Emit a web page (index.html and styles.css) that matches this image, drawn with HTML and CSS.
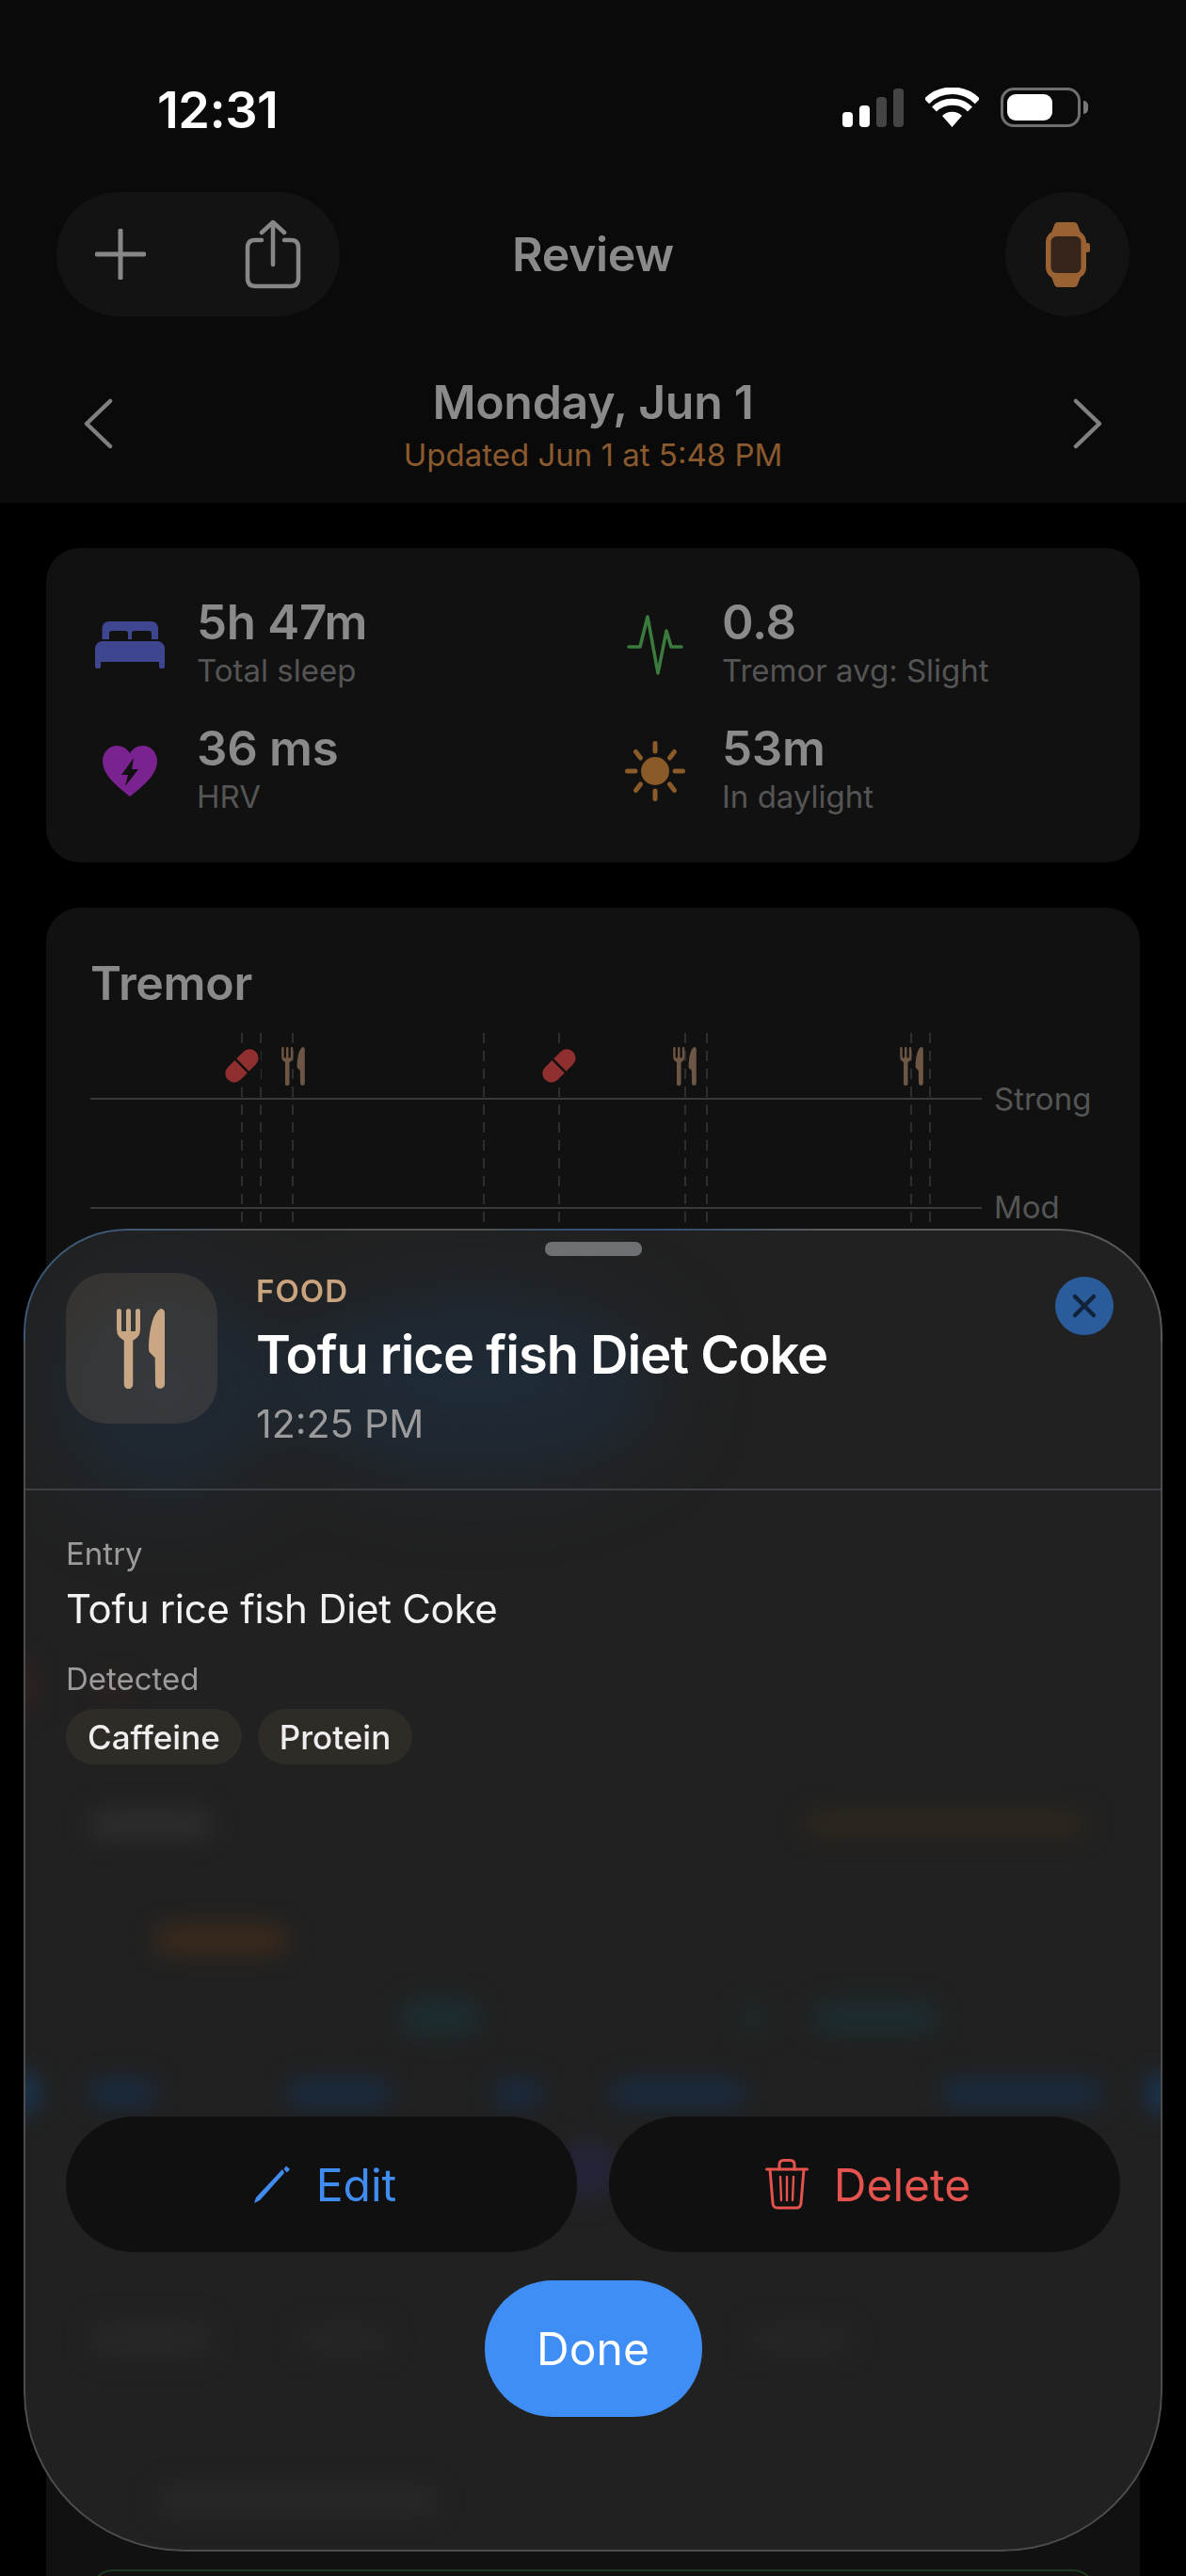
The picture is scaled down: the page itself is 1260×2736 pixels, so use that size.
FILE: index.html
```html
<!DOCTYPE html>
<html lang="en">
<head>
  <meta charset="UTF-8">
  <title>Review</title>
  <link rel="stylesheet" href="styles.css">
</head>
<body>
  <svg class="defs" width="0" height="0">
    <symbol id="fork-knife" viewBox="0 0 51 85">
      <path d="M2.5 2.5V22Q2.5 30 12.5 33Q22.5 30 22.5 22V2.5M12.5 2.5V30" fill="none" stroke="currentColor" stroke-width="5" stroke-linecap="round"/>
      <path d="M5 24H20V30L12.5 33L5 30Z" fill="currentColor"/>
      <path d="M12.5 30V80.5" fill="none" stroke="currentColor" stroke-width="9.5" stroke-linecap="round"/>
      <path d="M46.5 0C49.5 0 51 2 51 4.5V80A5 5 0 0 1 41 80L40.7 52L35 46.5Q34 45.5 34 43C34 25 38 4 46.5 0Z" fill="currentColor"/>
    </symbol>
    <symbol id="pill" viewBox="0 0 36 36">
      <g transform="rotate(-45 18 18)">
        <rect x="-3" y="8.500" width="42" height="19" rx="9.500" fill="#8f2f2f"/>
        <path d="M18 8V28" stroke="#111" stroke-width="2.6"/>
      </g>
    </symbol>
  </svg>

  <header class="top">
    <div class="status">
      <span class="clock">12:31</span>
      <div class="status-icons">
        <div class="signal">
          <i class="bar b1"></i><i class="bar b2"></i><i class="bar b3"></i><i class="bar b4"></i>
        </div>
        <svg class="wifi" width="57" height="42" viewBox="0 0 57 42">
          <path d="M28.5 42L18 30A15 15 0 0 1 39 30Z" fill="#fff"/>
          <path d="M9.5 23A27 27 0 0 1 47.5 23" fill="none" stroke="#fff" stroke-width="7"/>
          <path d="M1.5 14.5A38 38 0 0 1 55.5 14.5" fill="none" stroke="#fff" stroke-width="7.5"/>
        </svg>
        <div class="battery"><div class="battery-fill"></div></div>
        <div class="battery-nub"></div>
      </div>
    </div>

    <div class="nav">
      <div class="nav-pill">
        <svg width="54" height="54" viewBox="0 0 54 54">
          <path d="M27 2V52M2 27H52" stroke="#878787" stroke-width="5" stroke-linecap="round"/>
        </svg>
        <svg width="60" height="74" viewBox="0 0 60 74" fill="none" stroke="#878787" stroke-width="4.5" stroke-linecap="round" stroke-linejoin="round">
          <path d="M18 22H11Q3 22 3 30V62Q3 71 11 71H49Q57 71 57 62V30Q57 22 49 22H42"/>
          <path d="M30 48V3M18 14L30 3L42 14"/>
        </svg>
      </div>
      <h1 class="nav-title">Review</h1>
      <div class="nav-round">
        <svg width="47" height="69" viewBox="0 0 47 69">
          <path d="M13 0H30Q33 0 34 3L37 11H6L9 3Q10 0 13 0Z" fill="#9a6132"/>
          <path d="M6 58H37L34 66Q33 69 30 69H13Q10 69 9 66Z" fill="#9a6132"/>
          <rect x="0" y="9" width="43" height="51" rx="12" fill="#9a6132"/>
          <rect x="41" y="22" width="6" height="10" rx="2.5" fill="#9a6132"/>
          <rect x="5.5" y="15" width="32" height="39" rx="6" fill="#352419"/>
        </svg>
      </div>
    </div>

    <div class="date-row">
      <svg width="33" height="54" viewBox="0 0 33 54">
        <path d="M29 3L4 27L29 51" fill="none" stroke="#808080" stroke-width="4.5" stroke-linecap="round" stroke-linejoin="round"/>
      </svg>
      <div class="date-text">
        <div class="date">Monday, Jun 1</div>
        <div class="updated">Updated Jun 1 at 5:48 PM</div>
      </div>
      <svg width="33" height="54" viewBox="0 0 33 54">
        <path d="M4 3L29 27L4 51" fill="none" stroke="#808080" stroke-width="4.5" stroke-linecap="round" stroke-linejoin="round"/>
      </svg>
    </div>
  </header>

  <main class="content">
    <section class="card stats">
      <div class="stat">
        <div class="stat-icon">
          <svg width="74" height="50" viewBox="0 0 74 50" fill="#3f4690">
            <path d="M14 0H60a7 7 0 0 1 7 7V19H60V13a3 3 0 0 0-3-3H42a3 3 0 0 0-3 3V19H35V13a3 3 0 0 0-3-3H18a3 3 0 0 0-3 3V19H7.5V7a7 7 0 0 1 6.500-7Z"/>
            <path d="M0 29a8 8 0 0 1 8-8H66a8 8 0 0 1 8 8V47.500a3 3 0 0 1-6 0V43H6v4.500a3 3 0 0 1-6 0Z"/>
          </svg>
        </div>
        <div>
          <div class="stat-value">5h 47m</div>
          <div class="stat-label">Total sleep</div>
        </div>
      </div>
      <div class="stat">
        <div class="stat-icon">
          <svg width="60" height="64" viewBox="0 0 60 64">
            <path d="M2 34H14L22 2L33 62L42 17L47 34H58" fill="none" stroke="#3a7a3c" stroke-width="3.6" stroke-linecap="round" stroke-linejoin="round"/>
          </svg>
        </div>
        <div>
          <div class="stat-value">0.8</div>
          <div class="stat-label">Tremor avg: Slight</div>
        </div>
      </div>
      <div class="stat">
        <div class="stat-icon">
          <svg width="58" height="54" viewBox="0 0 58 54">
            <path d="M29 54C15 43 0 31 0 16C0 7 7 0 15 0C21 0 26 3 29 8C32 3 37 0 43 0C51 0 58 7 58 16C58 31 43 43 29 54Z" fill="#7a2290"/>
            <path d="M33 13L20 31H27L24 43L38 25H31Z" fill="#111"/>
          </svg>
        </div>
        <div>
          <div class="stat-value">36 ms</div>
          <div class="stat-label">HRV</div>
        </div>
      </div>
      <div class="stat">
        <div class="stat-icon">
          <svg width="64" height="64" viewBox="0 0 64 64">
            <circle cx="32" cy="32" r="15" fill="#8a5a28"/>
            <path d="M32 2.500V11M32 53V61.500M2.500 32H11M53 32H61.500M11.500 11.500L16.500 18M47.500 46L52.500 52.500M52.500 11.500L47.500 18M16.500 46L11.500 52.500" stroke="#8a5a28" stroke-width="5" stroke-linecap="round"/>
          </svg>
        </div>
        <div>
          <div class="stat-value">53m</div>
          <div class="stat-label">In daylight</div>
        </div>
      </div>
    </section>

    <section class="card tremor">
      <h2 class="card-title">Tremor</h2>
      <div class="chart">
        <svg class="chart-lines" width="1162" height="420" viewBox="0 0 1162 420">
          <g stroke="#3a3a3a" stroke-width="2">
            <path d="M47 70H994M47 186H994"/>
          </g>
          <g stroke="#2e2e2e" stroke-width="2" stroke-dasharray="11 8">
            <path d="M208 0V420M228 0V420M262 0V420M465 0V420M545 0V420M679 0V420M702 0V420M919 0V420M939 0V420"/>
          </g>
          <g class="chart-food">
            <rect x="188" y="14" width="40" height="44" fill="#111"/>
            <rect x="525" y="14" width="40" height="44" fill="#111"/>
            <use href="#pill" x="190" y="17" width="36" height="36"/>
            <use href="#pill" x="527" y="17" width="36" height="36"/>
            <use href="#fork-knife" x="250" y="15" width="25" height="41"/>
            <use href="#fork-knife" x="666" y="15" width="25" height="41"/>
            <use href="#fork-knife" x="907" y="15" width="25" height="41"/>
          </g>
        </svg>
        <span class="chart-label label-strong">Strong</span>
        <span class="chart-label label-mod">Mod</span>
      </div>
      <div class="next-row"></div>
    </section>
  </main>

  <aside class="sheet">
    <div class="sheet-bg">
      <svg width="1210" height="1405" viewBox="0 0 1210 1405">
        <defs>
          <filter id="soft" x="-50%" y="-100%" width="200%" height="300%" color-interpolation-filters="sRGB"><feGaussianBlur stdDeviation="13"/></filter>
          <filter id="softer" x="-50%" y="-50%" width="200%" height="200%" color-interpolation-filters="sRGB"><feGaussianBlur stdDeviation="45"/></filter>
        </defs>
        <g filter="url(#softer)">
          <ellipse cx="150" cy="170" rx="120" ry="120" fill="#1d2f42" opacity=".55"/>
          <ellipse cx="480" cy="165" rx="200" ry="95" fill="#1d2f42" opacity=".65"/>
        </g>
        <g filter="url(#soft)">
          <rect x="80" y="470" width="30" height="36" rx="14" fill="#4a2222" opacity=".35"/>
          <rect x="-10" y="455" width="22" height="60" rx="10" fill="#4a2222" opacity=".45"/>
          <rect x="70" y="618" width="130" height="28" rx="12" fill="#2f2f2f"/>
          <rect x="830" y="620" width="300" height="24" rx="12" fill="#30281d"/>
          <rect x="140" y="742" width="140" height="26" rx="12" fill="#402c1b"/>
          <rect x="400" y="820" width="85" height="36" rx="14" fill="#1c2e32"/>
          <rect x="760" y="825" width="30" height="28" rx="12" fill="#1f2a2c"/>
          <rect x="840" y="822" width="130" height="32" rx="14" fill="#1c2e32"/>
          <rect x="70" y="904" width="70" height="28" rx="12" fill="#182c42"/>
          <rect x="280" y="904" width="110" height="28" rx="12" fill="#182c42"/>
          <rect x="500" y="904" width="50" height="28" rx="12" fill="#182c42"/>
          <rect x="625" y="904" width="140" height="28" rx="12" fill="#182c42"/>
          <rect x="975" y="904" width="170" height="28" rx="12" fill="#182c42"/>
          <rect x="-14" y="898" width="28" height="40" rx="12" fill="#173a5e"/>
          <rect x="1196" y="898" width="28" height="40" rx="12" fill="#173a5e"/>
          <rect x="570" y="970" width="60" height="60" rx="25" fill="#25253a"/>
          <rect x="70" y="1160" width="130" height="38" rx="14" fill="#272727"/>
          <rect x="290" y="1165" width="100" height="30" rx="14" fill="#262626"/>
          <rect x="770" y="1165" width="110" height="30" rx="14" fill="#262626"/>
          <rect x="140" y="1335" width="300" height="32" rx="14" fill="#282828"/>
        </g>
      </svg>
    </div>

    <div class="handle"></div>

    <div class="sheet-head">
      <div class="tile">
        <svg width="51" height="85" class="tile-icon"><use href="#fork-knife"/></svg>
      </div>
      <div class="head-text">
        <div class="kind">FOOD</div>
        <div class="title">Tofu rice fish Diet Coke</div>
        <div class="time">12:25 PM</div>
      </div>
      <div class="close">
        <svg width="28" height="28" viewBox="0 0 28 28">
          <path d="M4 4L24 24M24 4L4 24" stroke="#10233a" stroke-width="4.500" stroke-linecap="round"/>
        </svg>
      </div>
    </div>

    <div class="sheet-body">
      <div class="field-label">Entry</div>
      <div class="field-value">Tofu rice fish Diet Coke</div>
      <div class="field-label detected">Detected</div>
      <div class="chips">
        <span class="chip">Caffeine</span>
        <span class="chip">Protein</span>
      </div>
    </div>

    <div class="actions">
      <div class="action-row">
        <div class="action edit">
          <svg width="40" height="40" viewBox="0 0 40 40">
            <path d="M31 4L3 34L1 40L7 37L33 8Z" fill="#408cf0"/>
            <path d="M35 0.500L39 4L36 7.500L32.500 4Z" fill="#408cf0"/>
          </svg>
          <span>Edit</span>
        </div>
        <div class="action delete">
          <svg width="46" height="54" viewBox="0 0 46 54" fill="none" stroke="#e5534e" stroke-width="3" stroke-linecap="round" stroke-linejoin="round">
            <path d="M1.500 11H44.500"/>
            <path d="M15 11V6Q15 1.500 19.500 1.500H26.500Q31 1.500 31 6V11"/>
            <path d="M5 11L8 47Q8.500 52 13 52H33Q37.500 52 38 47L41 11"/>
            <path d="M16 19L17 44M23 19V44M30 19L29 44" stroke-width="2.400"/>
          </svg>
          <span>Delete</span>
        </div>
      </div>
      <div class="done">Done</div>
    </div>
  </aside>
</body>
</html>
```

FILE: styles.css
```css
* {
  box-sizing: border-box;
}

html, body {
  margin: 0;
  padding: 0;
  background: #000;
}

body {
  position: relative;
  width: 1260px;
  height: 2736px;
  overflow: hidden;
  font-family: Inter, "Noto Sans", sans-serif;
  color: #fff;
}

.defs {
  position: absolute;
}

/* top bar */
.top {
  height: 534px;
  background: #0a0a0a;
}

.status {
  display: flex;
  justify-content: space-between;
  align-items: center;
  height: 204px;
  padding: 0 104px 0 167px;
}

.clock {
  font-size: 54px;
  font-weight: 600;
  letter-spacing: -0.5px;
  line-height: 60px;
  margin-top: 30px;
}

.status-icons {
  display: flex;
  align-items: center;
  margin-top: 24px;
}

.signal {
  display: flex;
  align-items: flex-end;
  gap: 7px;
  height: 41px;
  margin-right: 23px;
}

.bar {
  width: 11px;
  border-radius: 4px;
  background: #fff;
}

.b1 { height: 16px; }
.b2 { height: 23px; }
.b3 { height: 32px; background: #444; }
.b4 { height: 41px; background: #444; }

.wifi {
  margin-right: 23px;
}

.battery {
  width: 85px;
  height: 42px;
  padding: 4px;
  border: 3.5px solid #6f6f6f;
  border-radius: 14px;
}

.battery-fill {
  width: 48px;
  height: 100%;
  border-radius: 9px;
  background: #fff;
}

.battery-nub {
  width: 5px;
  height: 14px;
  margin-left: 3px;
  border-radius: 0 7px 7px 0;
  background: #777;
}

.nav {
  display: grid;
  grid-template-columns: 1fr auto 1fr;
  align-items: center;
  height: 132px;
  padding: 0 60px;
}

.nav-pill {
  display: flex;
  align-items: center;
  gap: 105px;
  width: 301px;
  height: 132px;
  padding-left: 41px;
  border-radius: 66px;
  background: #131313;
}

.nav-title {
  margin: 0;
  font-size: 50px;
  font-weight: 600;
  color: #8a8a8a;
  letter-spacing: -0.3px;
}

.nav-round {
  display: flex;
  justify-content: center;
  align-items: center;
  justify-self: end;
  width: 132px;
  height: 132px;
  border-radius: 50%;
  background: #131313;
}

.date-row {
  display: flex;
  justify-content: space-between;
  align-items: center;
  padding: 0 88px;
  margin-top: 61px;
}

.date-text {
  text-align: center;
}

.date {
  font-size: 50px;
  font-weight: 600;
  line-height: 60px;
  color: #8a8a8a;
  letter-spacing: -0.3px;
}

.updated {
  margin-top: 6px;
  font-size: 33px;
  line-height: 40px;
  color: #8a5a2e;
}

/* cards */
.content {
  display: flex;
  flex-direction: column;
  gap: 48px;
  padding: 48px 49px 0;
}

.card {
  border-radius: 36px;
  background: #111;
}

.stats {
  display: grid;
  grid-template-columns: 558px 1fr;
  row-gap: 26px;
  align-content: start;
  height: 334px;
  padding: 49px 0 0 52px;
}

.stat {
  display: flex;
  gap: 34px;
}

.stat-icon {
  display: flex;
  justify-content: center;
  align-items: center;
  width: 74px;
  height: 108px;
}

.stat-value {
  font-size: 51px;
  font-weight: 600;
  line-height: 60px;
  color: #8a8a8a;
  letter-spacing: -0.3px;
}

.stat-label {
  font-size: 33px;
  line-height: 42px;
  color: #555;
}

.tremor {
  position: relative;
  height: 1900px;
  padding-top: 56px;
}

.card-title {
  margin: 0 0 29px 47px;
  font-size: 50px;
  font-weight: 600;
  line-height: 48px;
  color: #8a8a8a;
  letter-spacing: -0.3px;
}

.chart {
  position: relative;
  height: 420px;
}

.chart-lines {
  display: block;
}

.chart-food {
  color: #6e5644;
}

.chart-label {
  position: absolute;
  left: 1007px;
  font-size: 33px;
  line-height: 40px;
  color: #555;
}

.label-strong { top: 50px; }
.label-mod { top: 165px; }

.next-row {
  position: absolute;
  top: 1765px;
  left: 47px;
  right: 47px;
  height: 100px;
  border: 2px solid #1d3a20;
  border-radius: 24px;
}

/* bottom sheet */
.sheet {
  position: absolute;
  top: 1305px;
  left: 25px;
  display: flex;
  flex-direction: column;
  width: 1210px;
  height: 1405px;
  border-radius: 110px 110px 170px 170px;
  background: #212121;
}

.sheet::after {
  content: "";
  position: absolute;
  inset: 0;
  padding: 2px;
  border-radius: inherit;
  background:
    linear-gradient(90deg, #3c5a78 0, #3c5a78 8%, #505050 20%, #505050 40%, #34506e 47%, #34506e 58%, #5a5a5a 70%) top / 100% 120px no-repeat,
    #4d4d4d;
  -webkit-mask: linear-gradient(#000 0 0) content-box, linear-gradient(#000 0 0);
  -webkit-mask-composite: xor;
  mask-composite: exclude;
  pointer-events: none;
}

.sheet-bg {
  position: absolute;
  inset: 0;
  overflow: hidden;
  border-radius: inherit;
}

.sheet-bg svg {
  display: block;
}

.handle {
  position: relative;
  width: 103px;
  height: 15px;
  margin: 14px auto 0;
  border-radius: 7px;
  background: #6f7074;
}

.sheet-head {
  position: relative;
  display: flex;
  height: 249px;
  padding: 18px 52px 0 45px;
  border-bottom: 2px solid #3c4044;
}

.tile {
  display: flex;
  justify-content: center;
  align-items: center;
  flex: none;
  width: 161px;
  height: 160px;
  padding-right: 2px;
  border-radius: 44px;
  background: rgba(205, 170, 135, 0.13);
}

.tile-icon {
  color: #c9a684;
}

.head-text {
  margin-left: 41px;
}

.kind {
  font-size: 33px;
  font-weight: 600;
  line-height: 38px;
  color: #c9a27e;
  letter-spacing: 1px;
}

.title {
  margin-top: 14px;
  font-size: 56px;
  font-weight: 600;
  line-height: 70px;
  letter-spacing: -1px;
}

.time {
  margin-top: 13px;
  font-size: 41px;
  line-height: 50px;
  color: #9b9b9b;
}

.close {
  display: flex;
  justify-content: center;
  align-items: center;
  width: 62px;
  height: 62px;
  margin: 4px 0 0 auto;
  border-radius: 50%;
  background: #2a5c9b;
}

.sheet-body {
  position: relative;
  padding: 47px 0 0 45px;
}

.field-label {
  font-size: 33px;
  line-height: 40px;
  color: #9b9b9b;
}

.field-value {
  margin-top: 14px;
  font-size: 42px;
  line-height: 50px;
  letter-spacing: -0.3px;
  color: #f2f2f2;
}

.detected {
  margin-top: 29px;
}

.chips {
  display: flex;
  gap: 17px;
  margin-top: 12px;
}

.chip {
  display: flex;
  align-items: center;
  height: 59px;
  padding: 0 23px;
  border-radius: 30px;
  font-size: 35px;
  font-weight: 500;
  color: #eee;
  background: #2f2c28;
}

.actions {
  position: relative;
  display: flex;
  flex-direction: column;
  align-items: center;
  gap: 30px;
  margin-top: auto;
  padding: 0 45px 143px;
}

.action-row {
  display: flex;
  gap: 34px;
  width: 100%;
}

.action {
  display: flex;
  flex: 1;
  justify-content: center;
  align-items: center;
  gap: 27px;
  height: 144px;
  padding-left: 7px;
  border-radius: 72px;
  font-size: 48px;
  background: #101010;
}

.edit {
  color: #408cf0;
}

.delete {
  color: #e5534e;
}

.done {
  display: flex;
  justify-content: center;
  align-items: center;
  width: 231px;
  height: 145px;
  border-radius: 72px;
  font-size: 48px;
  background: #3f8ef5;
}
```
